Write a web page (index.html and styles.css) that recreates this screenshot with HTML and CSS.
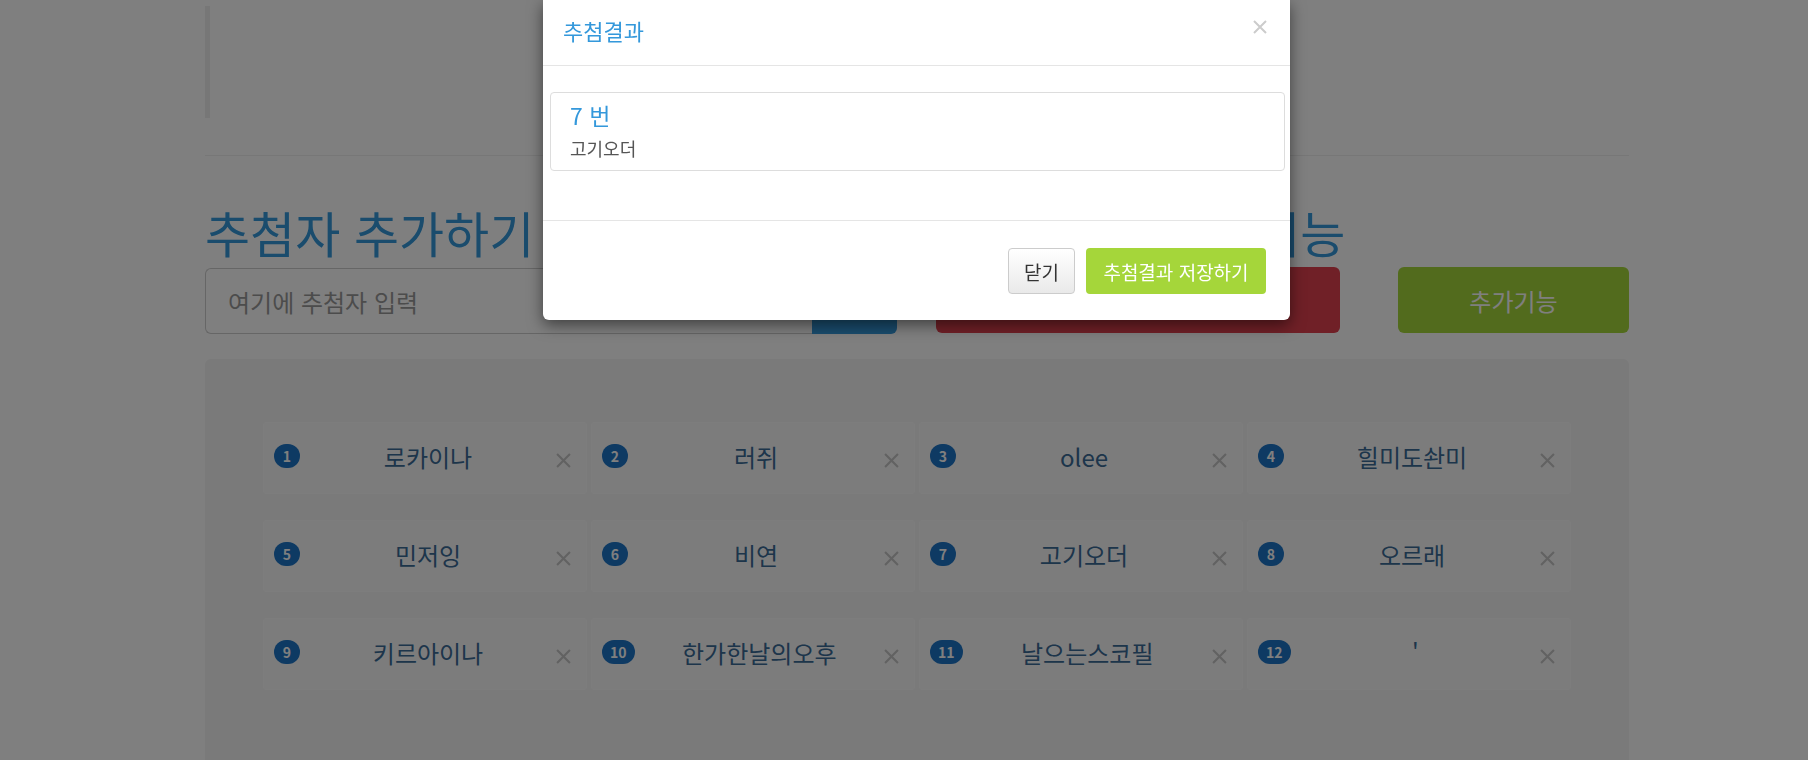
FILE: index.html
```html
<!DOCTYPE html>
<html lang="ko">
<head>
<meta charset="UTF-8">
<title>추첨기</title>
<link rel="stylesheet" href="styles.css">
</head>
<body>
<div class="page">
    <div class="quote"></div>
    <hr class="rule">

    <div class="top-row">
        <div class="col-left">
            <h2 class="section-title">추첨자 추가하기</h2>
            <div class="input-group">
                <input class="name-input" type="text" placeholder="여기에 추첨자 입력">
                <button class="btn-add">추가</button>
            </div>
        </div>
        <div class="col-right">
            <h2 class="section-title tight">추첨하기 &amp; 추가기능</h2>
            <div class="action-row">
                <button class="btn-draw">추첨하기</button>
                <button class="btn-extra">추가기능</button>
            </div>
        </div>
    </div>

    <div class="board">
        <div class="card"><span class="badge">1</span><span class="name">로카이나</span><span class="remove"><svg viewBox="0 0 14 14"><path d="M1 1L13 13M13 1L1 13"/></svg></span></div>
        <div class="card"><span class="badge">2</span><span class="name">러쥐</span><span class="remove"><svg viewBox="0 0 14 14"><path d="M1 1L13 13M13 1L1 13"/></svg></span></div>
        <div class="card"><span class="badge">3</span><span class="name">olee</span><span class="remove"><svg viewBox="0 0 14 14"><path d="M1 1L13 13M13 1L1 13"/></svg></span></div>
        <div class="card"><span class="badge">4</span><span class="name">힐미도솬미</span><span class="remove"><svg viewBox="0 0 14 14"><path d="M1 1L13 13M13 1L1 13"/></svg></span></div>
        <div class="card"><span class="badge">5</span><span class="name">민저잉</span><span class="remove"><svg viewBox="0 0 14 14"><path d="M1 1L13 13M13 1L1 13"/></svg></span></div>
        <div class="card"><span class="badge">6</span><span class="name">비연</span><span class="remove"><svg viewBox="0 0 14 14"><path d="M1 1L13 13M13 1L1 13"/></svg></span></div>
        <div class="card"><span class="badge">7</span><span class="name">고기오더</span><span class="remove"><svg viewBox="0 0 14 14"><path d="M1 1L13 13M13 1L1 13"/></svg></span></div>
        <div class="card"><span class="badge">8</span><span class="name">오르래</span><span class="remove"><svg viewBox="0 0 14 14"><path d="M1 1L13 13M13 1L1 13"/></svg></span></div>
        <div class="card"><span class="badge">9</span><span class="name">키르아이나</span><span class="remove"><svg viewBox="0 0 14 14"><path d="M1 1L13 13M13 1L1 13"/></svg></span></div>
        <div class="card"><span class="badge">10</span><span class="name">한가한날의오후</span><span class="remove"><svg viewBox="0 0 14 14"><path d="M1 1L13 13M13 1L1 13"/></svg></span></div>
        <div class="card"><span class="badge">11</span><span class="name">날으는스코필</span><span class="remove"><svg viewBox="0 0 14 14"><path d="M1 1L13 13M13 1L1 13"/></svg></span></div>
        <div class="card"><span class="badge">12</span><span class="name">'</span><span class="remove"><svg viewBox="0 0 14 14"><path d="M1 1L13 13M13 1L1 13"/></svg></span></div>
    </div>
</div>

<div class="backdrop"></div>

<div class="modal">
    <div class="modal-header">
        <h4 class="modal-title">추첨결과</h4>
        <span class="close"><svg viewBox="0 0 14 14"><path d="M1 1L13 13M13 1L1 13"/></svg></span>
    </div>
    <div class="modal-body">
        <div class="result-item">
            <div class="result-num">7 번</div>
            <div class="result-name">고기오더</div>
        </div>
    </div>
    <div class="modal-footer">
        <button class="btn-close">닫기</button>
        <button class="btn-save">추첨결과 저장하기</button>
    </div>
</div>
</body>
</html>
```

FILE: styles.css
```css
body {
    margin: 0;
    background-color: #ffffff;
    font-family: "Noto Sans CJK KR", "Noto Sans", sans-serif;
    color: #333;
    overflow: hidden;
}

.page {
    width: 1424px;
    margin-left: 205px;
    padding-top: 6px;
}

.quote {
    height: 112px;
    border-left: 5px solid #eeeeee;
}

.rule {
    margin: 37px 0 0 0;
    border: none;
    border-top: 1px solid #eeeeee;
}

.top-row {
    display: grid;
    grid-template-columns: 692px 693px;
    column-gap: 39px;
    margin-top: 54px;
}

.section-title {
    margin: 0 0 15px 0;
    font-size: 49px;
    font-weight: normal;
    line-height: 43px;
    color: #3498db;
    white-space: nowrap;
}

.section-title.tight {
    word-spacing: -6px;
}

.input-group {
    display: flex;
    height: 66px;
}

.name-input {
    flex: 1;
    box-sizing: border-box;
    height: 66px;
    padding: 0 22px;
    border: 1px solid #cccccc;
    border-right: none;
    border-radius: 6px 0 0 6px;
    font-family: inherit;
    font-size: 24px;
    color: #555;
}

.name-input::placeholder {
    color: #999999;
}

.btn-add {
    width: 85px;
    border: none;
    border-radius: 0 6px 6px 0;
    background-color: #3498db;
    color: #fff;
    font-family: inherit;
    font-size: 20px;
}

.action-row {
    display: grid;
    grid-template-columns: 404px 1fr;
    column-gap: 58px;
    margin-top: -1px;
}

.btn-draw,
.btn-extra {
    height: 66px;
    border: none;
    border-radius: 6px;
    color: #fff;
    font-family: inherit;
    font-size: 24px;
}

.btn-draw {
    background-color: #e0414f;
}

.btn-extra {
    background-color: #a5d63a;
}

.board {
    margin-top: 25px;
    height: 420px;
    padding: 63px 58px;
    background-color: #f4f4f4;
    border-radius: 6px;
    display: grid;
    grid-template-columns: repeat(4, 324px);
    grid-auto-rows: 72px;
    column-gap: 4px;
    row-gap: 26px;
    align-content: start;
}

.card {
    display: flex;
    align-items: center;
    padding: 0 15px 0 10px;
    background-color: #f9f9f9;
    border: 1px solid #fbfbfb;
    border-radius: 3px;
}

.badge {
    min-width: 10px;
    padding: 3px 8px;
    border-radius: 12px;
    background-color: #1c74c6;
    color: #fff;
    font-size: 14px;
    font-weight: bold;
    line-height: 18px;
    text-align: center;
    margin-top: -4px;
}

.name {
    flex: 1;
    text-align: center;
    font-size: 24px;
    color: #3a6a96;
    margin-top: -3px;
}

.remove svg {
    display: block;
    width: 15px;
    height: 15px;
    margin-top: 4px;
}

.remove path {
    stroke: #c4c4c4;
    stroke-width: 2;
}

.backdrop {
    position: fixed;
    top: 0;
    left: 0;
    right: 0;
    bottom: 0;
    background-color: rgba(0, 0, 0, 0.5);
}

.modal {
    position: fixed;
    top: 0;
    left: 543px;
    width: 747px;
    background-color: #fff;
    border-radius: 0 0 6px 6px;
    box-shadow: 0 5px 15px rgba(0, 0, 0, 0.5);
}

.modal-header {
    display: flex;
    align-items: center;
    justify-content: space-between;
    box-sizing: border-box;
    height: 66px;
    padding: 0 23px 5px 20px;
    border-bottom: 1px solid #e5e5e5;
}

.modal-title {
    margin: 0;
    font-size: 22px;
    font-weight: normal;
    color: #3498db;
}

.close svg {
    display: block;
    width: 14px;
    height: 14px;
    margin-top: -6px;
}

.close path {
    stroke: #cccccc;
    stroke-width: 2;
}

.modal-body {
    padding: 26px 5px 49px 7px;
}

.result-item {
    padding: 8px 19px;
    border: 1px solid #dddddd;
    border-radius: 4px;
}

.result-num {
    font-size: 23px;
    line-height: 28px;
    color: #3498db;
}

.result-name {
    margin-top: 5px;
    font-size: 18px;
    line-height: 28px;
    color: #555;
}

.modal-footer {
    display: flex;
    justify-content: flex-end;
    gap: 11px;
    padding: 27px 24px 26px 0;
    border-top: 1px solid #e5e5e5;
}

.btn-close {
    width: 67px;
    height: 46px;
    border: 1px solid #cccccc;
    border-radius: 4px;
    background: linear-gradient(#ffffff, #e9e9e9);
    color: #333;
    font-family: inherit;
    font-size: 19px;
    line-height: 1;
}

.btn-save {
    width: 180px;
    height: 46px;
    border: none;
    border-radius: 4px;
    background-color: #a5d63a;
    color: #fff;
    font-family: inherit;
    font-size: 19px;
    line-height: 1;
}
```
